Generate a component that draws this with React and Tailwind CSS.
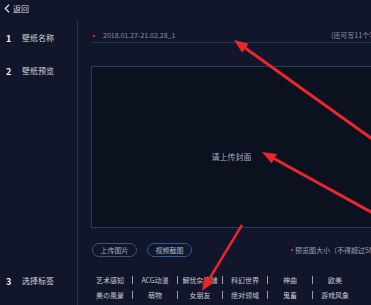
import React from "react";

function Arrow({ tip, tail, len = 14, half = 5.5, w = 3 }) {
  const dx = tip[0] - tail[0];
  const dy = tip[1] - tail[1];
  const d = Math.hypot(dx, dy);
  const ux = dx / d, uy = dy / d;
  const bx = tip[0] - ux * len, by = tip[1] - uy * len;
  const nx = -uy, ny = ux;
  const pts = `${tip[0]},${tip[1]} ${bx + nx * half},${by + ny * half} ${bx - nx * half},${by - ny * half}`;
  return (
    <g>
      <line x1={tail[0]} y1={tail[1]} x2={bx + ux * 2} y2={by + uy * 2} stroke="#e8262b" strokeWidth={w} />
      <polygon points={pts} fill="#e8262b" />
    </g>
  );
}

const row1 = ["艺术感知", "ACG动漫", "解忧杂货铺", "科幻世界", "神曲", "欧美"];
const row2 = ["美の風景", "萌物", "女朋友", "绝对领域", "鬼畜", "游戏风象"];

function TagRow({ items }) {
  return (
    <div className="flex h-[12px] items-center">
      {items.map((t, i) => (
        <div key={t} className="flex w-[45px] items-center">
          <span className="flex-1 text-center text-[7px] leading-none text-[#c3c8d4] whitespace-nowrap">{t}</span>
          {i < items.length - 1 ? <span className="h-[8px] w-px bg-[#9aa0ae]" /> : <span className="w-px" />}
        </div>
      ))}
    </div>
  );
}

export default function App() {
  return (
    <div className="relative h-[305px] w-[371px] overflow-hidden bg-[#11162a] font-['Noto_Sans_CJK_SC','Noto_Sans',sans-serif]">
      <div className="flex h-[20px] items-center pl-[4px] pb-[3px]">
        <svg width="6" height="9" viewBox="0 0 6 9" className="mr-[3px]">
          <path d="M5 0.8 L1.3 4.5 L5 8.2" stroke="#d6d9e0" strokeWidth="1.3" fill="none" />
        </svg>
        <span className="text-[8px] leading-none text-[#d6d9e0]">返回</span>
      </div>
      <div className="flex h-[285px]">
        <div className="flex w-[78px] shrink-0 flex-col border-r border-[#2a3043] pl-[6px]">
          <div className="mt-[11px] flex h-[14px] items-center">
            <span className="w-[16px] text-[9px] font-bold leading-none text-[#eef0f4]">1</span>
            <span className="text-[8px] leading-none text-[#d3d6de]">壁纸名称</span>
          </div>
          <div className="mt-[19px] flex h-[14px] items-center">
            <span className="w-[16px] text-[9px] font-bold leading-none text-[#eef0f4]">2</span>
            <span className="text-[8px] leading-none text-[#d3d6de]">壁纸预览</span>
          </div>
          <div className="mt-[196px] flex h-[14px] items-center">
            <span className="w-[16px] text-[9px] font-bold leading-none text-[#eef0f4]">3</span>
            <span className="text-[8px] leading-none text-[#d3d6de]">选择标签</span>
          </div>
        </div>
        <div className="flex w-[320px] shrink-0 flex-col pl-[13px]">
          <div className="mt-[9px] flex h-[14px] w-[300px] items-center border-b border-[#1b3753] pl-[2px]">
            <span className="h-[2px] w-[2px] bg-[#e0203a]" />
            <span className="ml-[8px] w-[228px] text-[7px] leading-none text-[#8e94a4] whitespace-nowrap">2018.01.27-21.02.28_1</span>
            <span className="text-[7px] leading-none text-[#8e94a4] whitespace-nowrap">(还可写11个字)</span>
          </div>
          <div className="mt-[23px] flex h-[162px] w-[281px] items-center justify-center border border-[#1d4064] bg-[#0c111f] pt-[20px]">
            <span className="text-[8px] leading-none text-[#a8afc2]">请上传封面</span>
          </div>
          <div className="mt-[15px] flex h-[14px] items-center pl-[1px]">
            <div className="flex h-[14px] w-[45px] items-center justify-center rounded-full border border-[#485064] text-[7px] leading-none text-[#a3aabb]">上传图片</div>
            <div className="ml-[10px] flex h-[14px] w-[45px] items-center justify-center rounded-full border border-[#2d5a9e] text-[7px] leading-none text-[#aab8d6]">视频截图</div>
            <span className="ml-[99px] h-[2px] w-[2px] bg-[#e0203a]" />
            <span className="ml-[2px] text-[7px] leading-none text-[#9aa3b8] whitespace-nowrap">预览图大小（不得超过5M）</span>
          </div>
          <div className="-ml-[3px] mt-[17px] flex flex-col gap-[3px]">
            <TagRow items={row1} />
            <TagRow items={row2} />
          </div>
        </div>
      </div>
      <svg className="pointer-events-none absolute inset-0" width="371" height="305" viewBox="0 0 371 305">
        <Arrow tip={[234, 40]} tail={[400, 159]} />
        <Arrow tip={[262, 152]} tail={[400, 228]} />
        <Arrow tip={[202, 291]} tail={[242, 225]} w={2.5} />
      </svg>
    </div>
  );
}
